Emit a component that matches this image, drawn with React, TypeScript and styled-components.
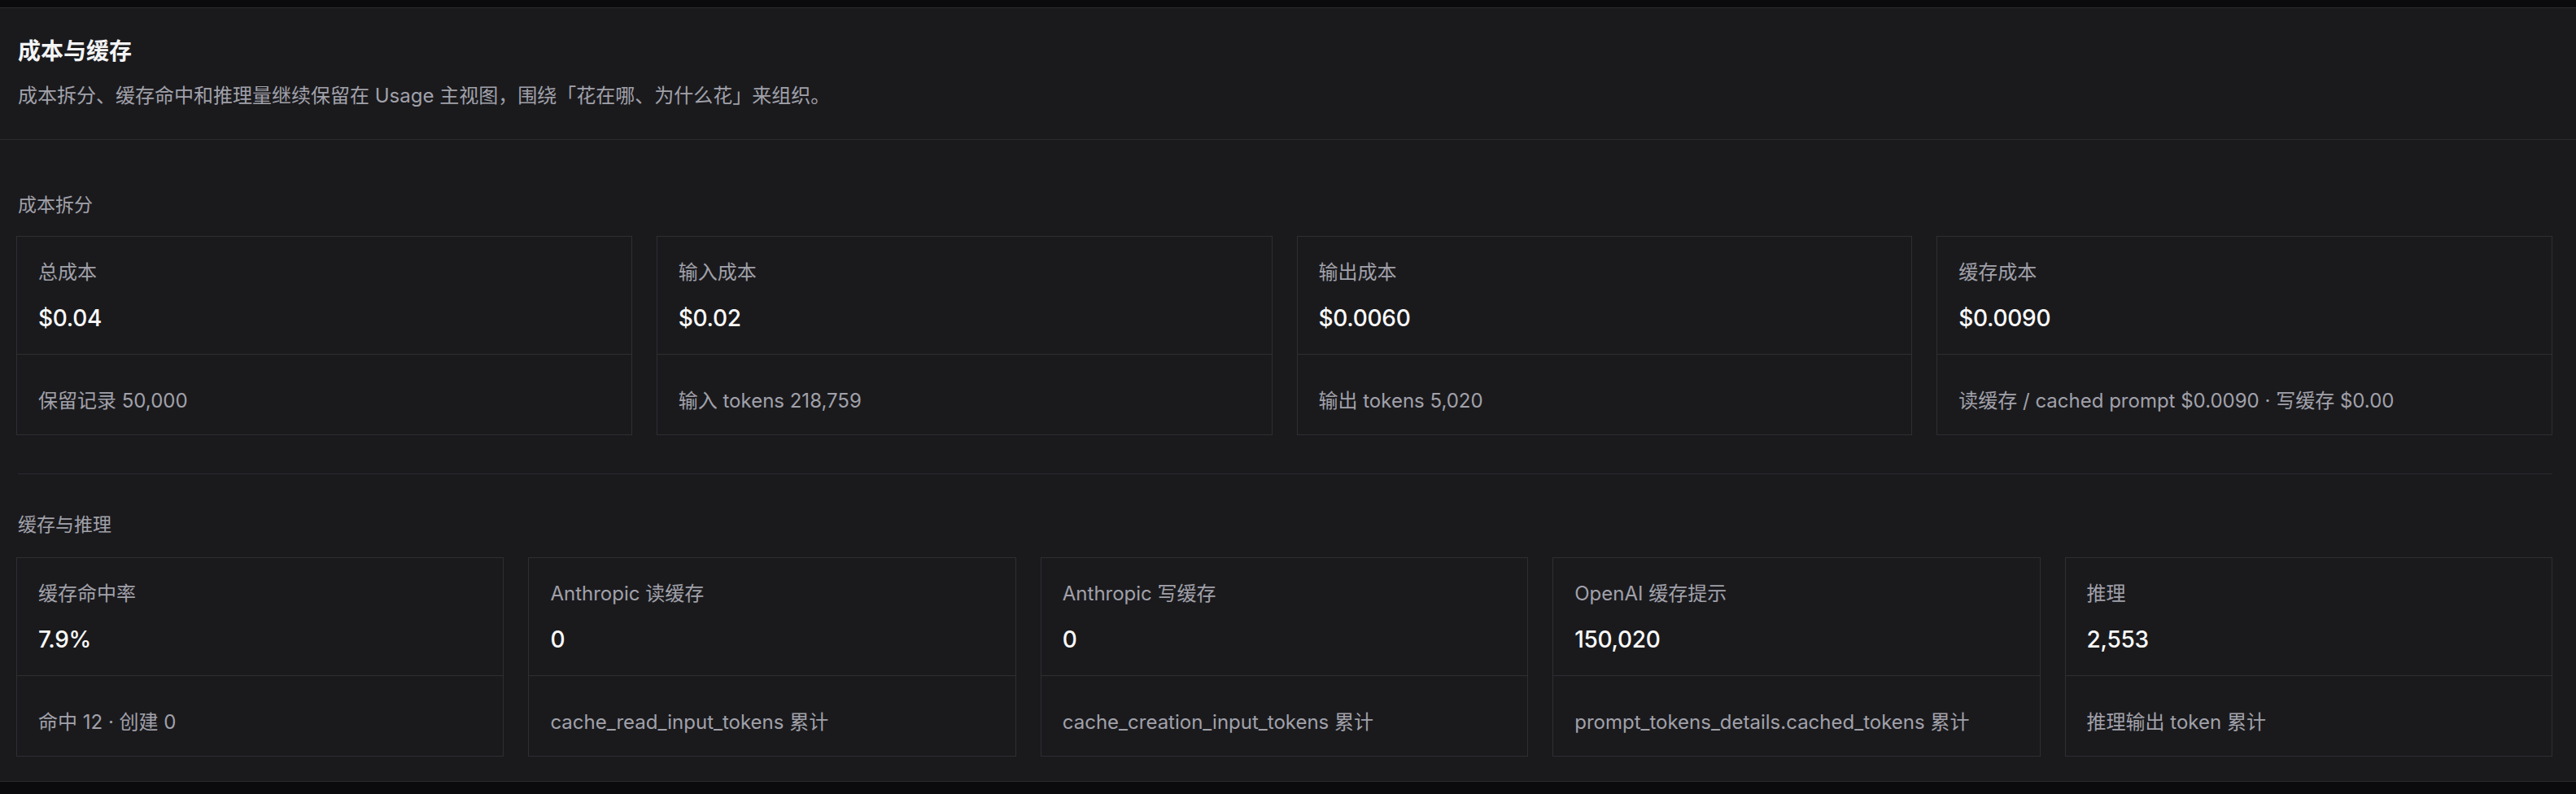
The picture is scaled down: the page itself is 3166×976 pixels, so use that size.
import styled, { createGlobalStyle } from 'styled-components';

const GlobalStyle = createGlobalStyle`
  html, body {
    margin: 0;
    padding: 0;
    background: #0b0b0d;
  }
  body {
    font-family: Inter, "Noto Sans CJK SC", sans-serif;
    color: #f4f4f5;
  }
`;

interface Metric {
  label: string;
  value: string;
  note: string;
}

const costMetrics: Metric[] = [
  { label: '总成本', value: '$0.04', note: '保留记录 50,000' },
  { label: '输入成本', value: '$0.02', note: '输入 tokens 218,759' },
  { label: '输出成本', value: '$0.0060', note: '输出 tokens 5,020' },
  { label: '缓存成本', value: '$0.0090', note: '读缓存 / cached prompt $0.0090 · 写缓存 $0.00' },
];

const cacheMetrics: Metric[] = [
  { label: '缓存命中率', value: '7.9%', note: '命中 12 · 创建 0' },
  { label: 'Anthropic 读缓存', value: '0', note: 'cache_read_input_tokens 累计' },
  { label: 'Anthropic 写缓存', value: '0', note: 'cache_creation_input_tokens 累计' },
  { label: 'OpenAI 缓存提示', value: '150,020', note: 'prompt_tokens_details.cached_tokens 累计' },
  { label: '推理', value: '2,553', note: '推理输出 token 累计' },
];

const Page = styled.div`
  padding-top: 9px;
  padding-bottom: 15px;
`;

const Panel = styled.section`
  background: #1a1a1d;
  border-top: 1px solid #2b2b2f;
  border-bottom: 1px solid #2b2b2f;
`;

const Header = styled.header`
  padding: 35px 22px 37px;
  border-bottom: 1px solid #2b2b2f;
  display: flex;
  flex-direction: column;
  gap: 21px;
`;

const Title = styled.h1`
  margin: 0;
  font-size: 28px;
  line-height: 36px;
  font-weight: 600;
  color: #f4f4f5;
`;

const Subtitle = styled.p`
  margin: 0;
  font-size: 24px;
  line-height: 32px;
  color: #a1a1aa;
`;

const Section = styled.div<{ $top: number; $bottom: number; $gap: number }>`
  padding: ${p => p.$top}px 29px ${p => p.$bottom}px 20px;
  display: flex;
  flex-direction: column;
  gap: ${p => p.$gap}px;
`;

const Divider = styled.hr`
  margin: 0 29px 0 22px;
  border: none;
  border-top: 1px solid #2b2b2f;
`;

const SectionTitle = styled.h2`
  margin: 0 0 0 2px;
  font-size: 23px;
  line-height: 32px;
  font-weight: 400;
  color: #a1a1aa;
`;

const CardGrid = styled.div<{ $cols: number }>`
  display: grid;
  grid-template-columns: repeat(${p => p.$cols}, minmax(0, 1fr));
  gap: 30px;
`;

const Card = styled.div`
  border: 1px solid #2e2e33;
  background: #1a1a1d;
  display: flex;
  flex-direction: column;
`;

const CardTop = styled.div`
  height: 145px;
  box-sizing: border-box;
  padding: 28px 26px 0;
  display: flex;
  flex-direction: column;
  gap: 22px;
  border-bottom: 1px solid #2e2e33;
`;

const CardLabel = styled.div`
  font-size: 24px;
  line-height: 32px;
  color: #a1a1aa;
  white-space: nowrap;
`;

const CardValue = styled.div`
  font-size: 28px;
  line-height: 36px;
  font-weight: 500;
  color: #fafafa;
  letter-spacing: -0.3px;
`;

const CardFoot = styled.div`
  height: 98px;
  box-sizing: border-box;
  padding: 41px 26px 0;
  font-size: 24px;
  line-height: 32px;
  color: #a1a1aa;
  white-space: nowrap;
  overflow: hidden;
`;

const MetricCard = ({ label, value, note }: Metric) => (
  <Card>
    <CardTop>
      <CardLabel>{label}</CardLabel>
      <CardValue>{value}</CardValue>
    </CardTop>
    <CardFoot>{note}</CardFoot>
  </Card>
);

export default function App() {
  return (
    <>
      <GlobalStyle />
      <Page>
        <Panel>
          <Header>
            <Title>成本与缓存</Title>
            <Subtitle>成本拆分、缓存命中和推理量继续保留在 Usage 主视图，围绕「花在哪、为什么花」来组织。</Subtitle>
          </Header>
          <Section $top={64} $bottom={47} $gap={22}>
            <SectionTitle>成本拆分</SectionTitle>
            <CardGrid $cols={4}>
              {costMetrics.map(m => (
                <MetricCard key={m.label} {...m} />
              ))}
            </CardGrid>
          </Section>
          <Divider />
          <Section $top={46} $bottom={30} $gap={24}>
            <SectionTitle>缓存与推理</SectionTitle>
            <CardGrid $cols={5}>
              {cacheMetrics.map(m => (
                <MetricCard key={m.label} {...m} />
              ))}
            </CardGrid>
          </Section>
        </Panel>
      </Page>
    </>
  );
}
